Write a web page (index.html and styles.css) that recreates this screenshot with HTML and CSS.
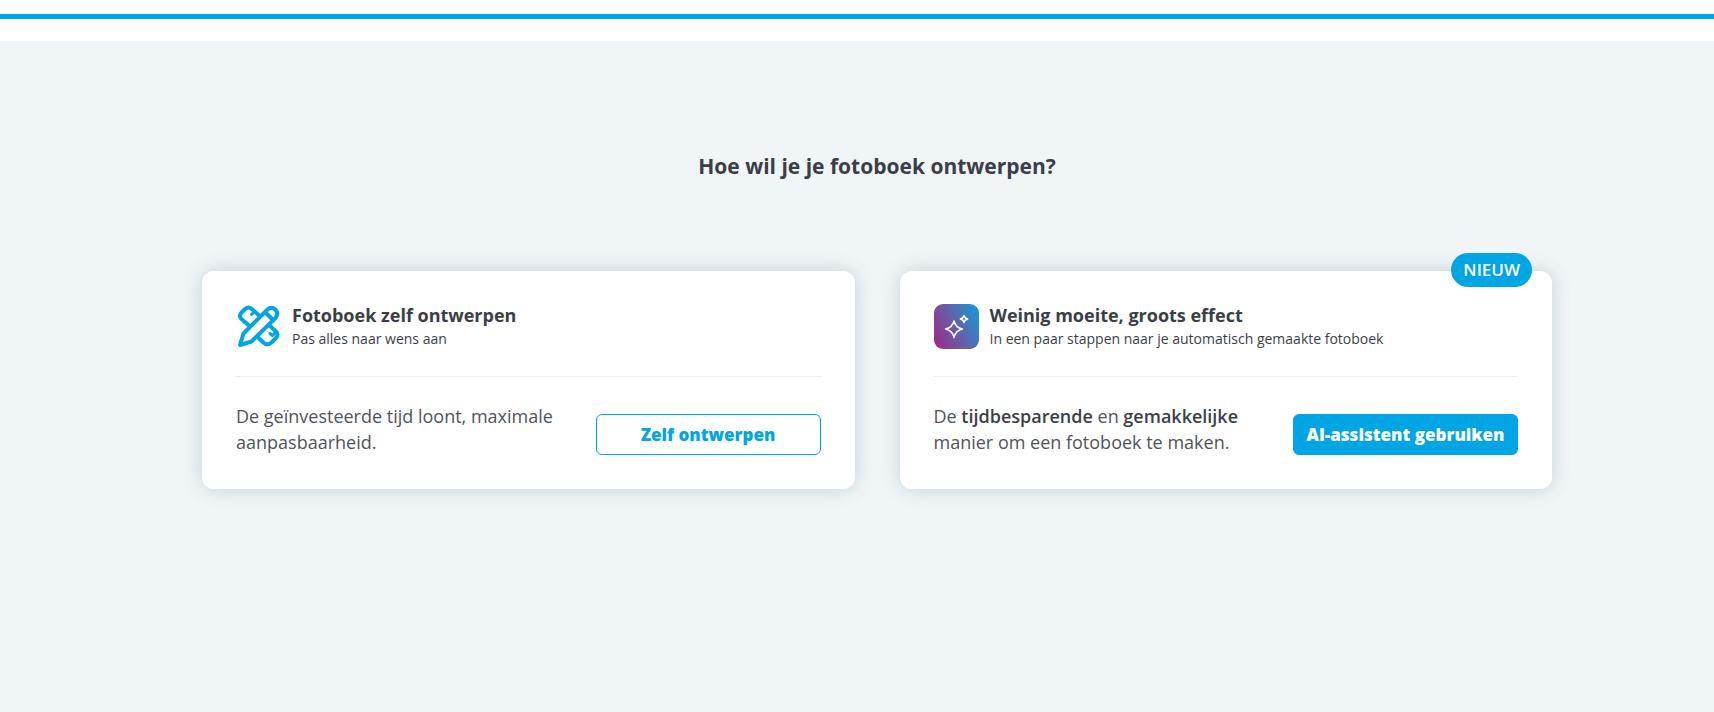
FILE: index.html
```
<!DOCTYPE html>
<html lang="nl">
<head>
<meta charset="utf-8">
<meta name="viewport" content="width=device-width, initial-scale=1.0">
<title>Fotoboek ontwerpen</title>
<link rel="stylesheet" href="styles.css">
</head>

<body>
<header class="topbar"></header>
<main class="chooser">
	<h1>Hoe wil je je fotoboek ontwerpen?</h1>
	<div class="cards">
		<section class="card">
			<div class="card-head">
				<svg class="icon" viewBox="0 0 45 45" fill="none" stroke="#00a5e3" stroke-width="4" stroke-linecap="round" stroke-linejoin="round" aria-hidden="true">
					<path d="M13.500 22L5.500 15Q2.500 12 5.500 8.500L9 5Q12.500 2 16 5L23 11.500"/>
					<path d="M17 6l1 2-2.500 2.500" stroke-width="3"/>
					<path d="M33.500 21.500L40 27.500Q43 30.500 40 34L35.500 38.500Q31.500 42 28 39L21.500 33"/>
					<path d="M39 29l-2.500 2.500-2.500-2" stroke-width="3"/>
					<path d="M4 41L7.500 29.500L31 6Q35 2 39.500 5.500Q43 9.500 39.500 14L15.500 37.500Z"/>
					<path d="M29.500 8.500l7 7"/>
				</svg>
				<div>
					<h2>Fotoboek zelf ontwerpen</h2>
					<p class="sub">Pas alles naar wens aan</p>
				</div>
			</div>
			<div class="card-body">
				<p>De geïnvesteerde tijd loont, maximale aanpasbaarheid.</p>
				<button type="button" class="btn outline">Zelf ontwerpen</button>
			</div>
		</section>

		<section class="card">
			<span class="badge">NIEUW</span>
			<div class="card-head">
				<svg class="icon" viewBox="0 0 45 45" fill="none" aria-hidden="true">
					<defs>
						<linearGradient id="ai" x1="0" y1="0.75" x2="1" y2="0.25">
							<stop offset="0" stop-color="#972f88"/>
							<stop offset="0.5" stop-color="#6461aa"/>
							<stop offset="1" stop-color="#1d93d3"/>
						</linearGradient>
					</defs>
					<rect width="45" height="45" rx="9" fill="url(#ai)"/>
					<path d="M20 17Q21.500 23.500 28.500 25Q21.500 26.500 20 33.500Q18.500 26.500 11.500 25Q18.500 23.500 20 17Z" stroke="#fff" stroke-width="1.500" stroke-linejoin="round"/>
					<path d="M30 11.500Q30.700 14.300 33.700 15Q30.700 15.700 30 18.500Q29.300 15.700 26.300 15Q29.300 14.300 30 11.500Z" stroke="#fff" stroke-width="1.500" stroke-linejoin="round"/>
				</svg>
				<div>
					<h2>Weinig moeite, groots effect</h2>
					<p class="sub">In een paar stappen naar je automatisch gemaakte fotoboek</p>
				</div>
			</div>
			<div class="card-body">
				<p>De <b>tijdbesparende</b> en <b>gemakkelijke</b> manier om een fotoboek te maken.</p>
				<button type="button" class="btn solid">AI-assistent gebruiken</button>
			</div>
		</section>
	</div>
</main>
</body>
</html>
```
FILE: styles.css
```
* {
	box-sizing: border-box;
}
body {
	margin: 0;
	min-height: 100vh;
	display: flex;
	flex-direction: column;
	font-family: "Open Sans", "Noto Sans", sans-serif;
	color: #3b3e47;
	background: #fff;
}
h1, h2, p {
	margin: 0;
}
.topbar {
	margin: 14px 0 22px;
	border-top: 5px solid #00a5e3;
}
.chooser {
	flex: 1;
	padding: 109px 20px 40px 60px;
	background: #f0f5f8;
}
h1 {
	font-size: 21px;
	line-height: 32px;
	text-align: center;
}
.cards {
	display: grid;
	grid-template-columns: 1fr 1fr;
	gap: 45px;
	max-width: 1350px;
	margin: 89px auto 0;
}
.card {
	position: relative;
	padding: 33px 34px 34px;
	border-radius: 12px;
	background: #fff;
	box-shadow: 0 0 20px rgba(30, 70, 80, 0.2);
}
.card-head {
	display: flex;
	align-items: center;
	gap: 11px;
	padding-bottom: 27px;
	border-bottom: 1px solid #eaecee;
}
.icon {
	flex: none;
	width: 45px;
	height: 45px;
}
h2 {
	margin-bottom: 2px;
	font-size: 18px;
	line-height: 22px;
}
.sub {
	font-size: 14px;
	line-height: 21px;
}
.card-body {
	display: flex;
	align-items: flex-end;
	justify-content: space-between;
	gap: 40px;
	padding-top: 26px;
}
.card-body p {
	max-width: 330px;
	font-size: 18px;
	line-height: 26px;
	color: #50535b;
}
.card-body b {
	font-weight: 600;
	color: #3b3e47;
}
.btn {
	flex: none;
	width: 225px;
	height: 41px;
	padding: 0;
	border: 1px solid #00a5e3;
	border-radius: 6px;
	font-family: inherit;
	font-size: 17px;
	font-weight: 800;
	cursor: pointer;
}
.outline {
	background: #fff;
	color: #00a5e3;
}
.solid {
	background: #00a5e3;
	color: #fff;
}
.badge {
	position: absolute;
	top: -18px;
	right: 20px;
	padding: 0 12px;
	border-radius: 17px;
	background: #00a5e3;
	color: #fff;
	font-size: 17px;
	font-weight: 600;
	line-height: 34px;
}
```
